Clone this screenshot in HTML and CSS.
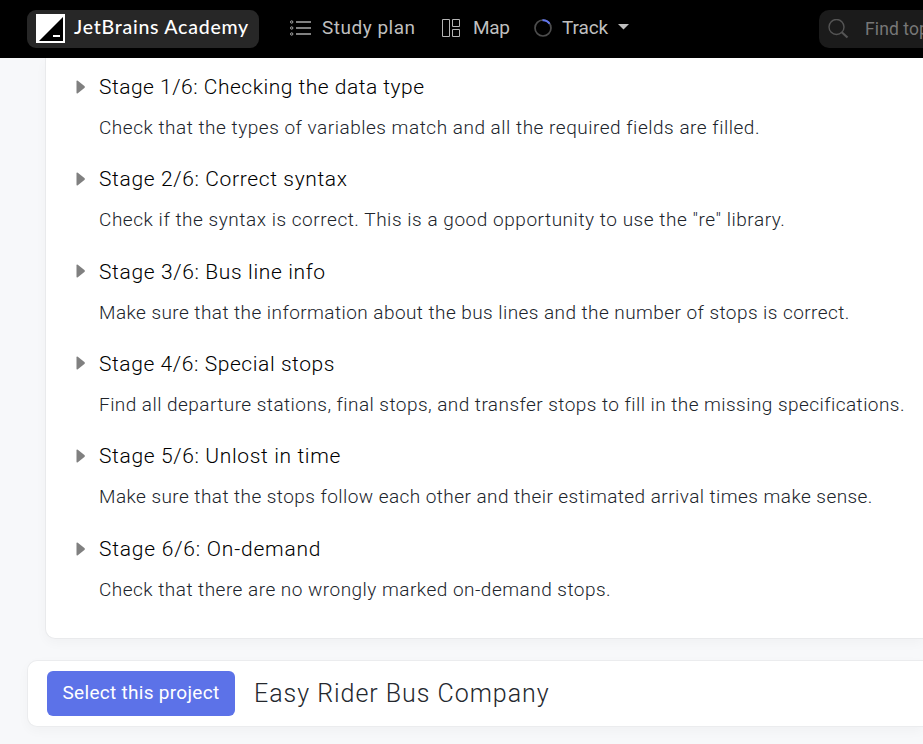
FILE: index.html
```html
<!DOCTYPE html>
<html lang="en">
<head>
<meta charset="utf-8">
<title>Easy Rider Bus Company</title>
<link rel="stylesheet" href="styles.css">
</head>
<body>
<header class="topbar">
  <a class="brand">
    <svg class="logo" width="29" height="29" viewBox="0 0 29 29"><path fill="#fff" d="M0 0h29v29H0z"/><path d="M27 3v24H3z"/><path fill="#fff" d="M17 21h7v2h-7z"/></svg>
    <span class="brand-name">JetBrains Academy</span>
  </a>
  <nav class="nav">
    <a class="nav-item plan"><svg width="21" height="17" viewBox="0 0 21 17" fill="none" stroke="#aaa"><path stroke-width="1.5" d="M6 3h15M6 9h15M6 15h15"/><circle cx="1.7" cy="3" r="1.2"/><circle cx="1.7" cy="9" r="1.2"/><circle cx="1.7" cy="15" r="1.2"/></svg><span>Study plan</span></a>
    <a class="nav-item map"><svg width="18" height="18" viewBox="0 0 18 18" fill="none" stroke="#b4b4b4"><path d="M.5.5h7v17h-7zM10.500.5h7v7h-7zM10.500 10.500h7v7h-7z"/></svg><span>Map</span></a>
    <a class="nav-item track"><svg width="18" height="18" viewBox="0 0 18 18" fill="none" stroke-width="1.700"><circle cx="9" cy="9" r="8" stroke="#4d4d4d"/><path stroke="#6175ed" stroke-width="2" d="M8.500 1.200A8 8 0 0 1 15.600 4.800"/></svg><span>Track</span><svg class="caret" width="11" height="6" viewBox="0 0 11 6"><path fill="#bfbfbf" d="M0 0h11L5.500 5.500z"/></svg></a>
  </nav>
  <div class="search">
    <svg width="21" height="20" viewBox="0 0 21 20" fill="none" stroke="#555"><circle cx="8.500" cy="8" r="7.500" stroke-width="1.400"/><path stroke-width="2.200" d="m13.500 13 6 5.500"/></svg>
    <span>Find topics</span>
  </div>
</header>
<main>
  <section class="stages">
    <article class="stage"><svg class="arrow" width="10" height="14" viewBox="0 0 10 14"><path d="M.5 1.500Q.5 0 1.800.8L8.400 6Q9.600 7 8.400 8L1.800 13.200Q.5 14 .5 12.500z"/></svg><div><h3>Stage 1/6: Checking the data type</h3><p>Check that the types of variables match and all the required fields are filled.</p></div></article>
    <article class="stage"><svg class="arrow" width="10" height="14" viewBox="0 0 10 14"><path d="M.5 1.500Q.5 0 1.800.8L8.400 6Q9.600 7 8.400 8L1.800 13.200Q.5 14 .5 12.500z"/></svg><div><h3>Stage 2/6: Correct syntax</h3><p>Check if the syntax is correct. This is a good opportunity to use the "re" library.</p></div></article>
    <article class="stage"><svg class="arrow" width="10" height="14" viewBox="0 0 10 14"><path d="M.5 1.500Q.5 0 1.800.8L8.400 6Q9.600 7 8.400 8L1.800 13.200Q.5 14 .5 12.500z"/></svg><div><h3>Stage 3/6: Bus line info</h3><p>Make sure that the information about the bus lines and the number of stops is correct.</p></div></article>
    <article class="stage"><svg class="arrow" width="10" height="14" viewBox="0 0 10 14"><path d="M.5 1.500Q.5 0 1.800.8L8.400 6Q9.600 7 8.400 8L1.800 13.200Q.5 14 .5 12.500z"/></svg><div><h3>Stage 4/6: Special stops</h3><p>Find all departure stations, final stops, and transfer stops to fill in the missing specifications.</p></div></article>
    <article class="stage"><svg class="arrow" width="10" height="14" viewBox="0 0 10 14"><path d="M.5 1.500Q.5 0 1.800.8L8.400 6Q9.600 7 8.400 8L1.800 13.200Q.5 14 .5 12.500z"/></svg><div><h3>Stage 5/6: Unlost in time</h3><p>Make sure that the stops follow each other and their estimated arrival times make sense.</p></div></article>
    <article class="stage"><svg class="arrow" width="10" height="14" viewBox="0 0 10 14"><path d="M.5 1.500Q.5 0 1.800.8L8.400 6Q9.600 7 8.400 8L1.800 13.200Q.5 14 .5 12.500z"/></svg><div><h3>Stage 6/6: On-demand</h3><p>Check that there are no wrongly marked on-demand stops.</p></div></article>
  </section>
  <section class="project-bar">
    <button class="select">Select this project</button>
    <h2>Easy Rider Bus Company</h2>
  </section>
</main>
</body>
</html>
```
FILE: styles.css
```css
* { box-sizing: border-box; }
body {
  margin: 0;
  height: 744px;
  overflow: hidden;
  background: #f7f8fa;
  font-family: Roboto, "Liberation Sans", sans-serif;
  white-space: nowrap;
}
svg { display: block; flex: none; }
h2, h3, p { margin: 0; }
.topbar {
  height: 58px;
  padding-top: 10px;
  display: flex;
  align-items: flex-start;
  background: #000;
  overflow: hidden;
}
.brand {
  display: flex;
  flex: none;
  width: 232px;
  height: 38px;
  margin-left: 27px;
  padding: 4px 0 0 9px;
  border-radius: 9px;
  background: #272727;
}
.brand-name {
  margin-left: 9px;
  color: #fff;
  font: 500 19.5px/26px Lato, sans-serif;
  letter-spacing: .75px;
}
.nav { display: flex; flex: none; width: 560px; height: 36px; }
.nav-item {
  display: flex;
  align-items: center;
  color: #bfbfbf;
  font-size: 19px;
  letter-spacing: .5px;
}
.nav-item span { padding-bottom: 2px; }
.plan { width: 152px; padding-left: 31px; }
.plan svg { margin-top: -1px; }
.plan span { margin-left: 11px; }
.map { width: 93px; padding-left: 31px; }
.map span { margin-left: 13px; letter-spacing: -.3px; }
.track { padding-left: 30px; }
.track span { margin-left: 10px; letter-spacing: -.1px; }
.caret { margin: 0 0 2px 10px; }
.search {
  display: flex;
  flex: none;
  align-items: center;
  width: 300px;
  height: 38px;
  padding-left: 9px;
  border-radius: 10px;
  background: #1b1b1b;
  color: #777;
  font-size: 17.5px;
  letter-spacing: .1px;
}
.search span { margin-left: 16px; padding-bottom: 1px; }
.stages {
  height: 580.500px;
  margin-left: 45px;
  padding: 12px 0 0 30px;
  border: solid #e9eaec;
  border-width: 0 0 1px 1px;
  border-bottom-left-radius: 10px;
  background: #fff;
  box-shadow: 0 4px 12px rgb(0 0 0 / 3%);
}
.stage { display: flex; height: 92.300px; }
.stage:nth-child(5) { height: 93px; }
.arrow { margin: 9.500px 13px 0 0; fill: #808080; }
h3 {
  height: 39px;
  color: #000;
  font-size: 21px;
  font-weight: 350;
  line-height: 34px;
  letter-spacing: .64px;
}
.stage:nth-child(1) h3 { letter-spacing: .5px; }
.stage:nth-child(4) h3 { letter-spacing: .58px; }
.stage:nth-child(6) h3 { letter-spacing: .78px; }
.stage p {
  color: #20242b;
  font-size: 19px;
  font-weight: 300;
  line-height: 38px;
  letter-spacing: .44px;
}
.stage:nth-child(1) p { letter-spacing: .515px; }
.stage:nth-child(2) p { letter-spacing: .54px; }
.stage:nth-child(4) p { letter-spacing: .452px; }
.stage:nth-child(6) p { letter-spacing: .48px; }
.project-bar {
  display: flex;
  align-items: center;
  height: 67px;
  margin: 21px 0 0 27px;
  padding-left: 19px;
  border: 1px solid #ebecee;
  border-right: 0;
  border-radius: 10px 0 0 10px;
  background: #fff;
  box-shadow: 0 4px 12px rgb(0 0 0 / 3%);
}
.select {
  width: 188px;
  height: 45px;
  padding: 0 0 1px;
  border: 0;
  border-radius: 6px;
  background: #5c72e8;
  color: #fff;
  font: 400 19px Roboto, sans-serif;
  letter-spacing: .3px;
}
h2 {
  margin-left: 19px;
  color: #24282e;
  font-size: 25px;
  font-weight: 300;
  letter-spacing: .97px;
}
```
